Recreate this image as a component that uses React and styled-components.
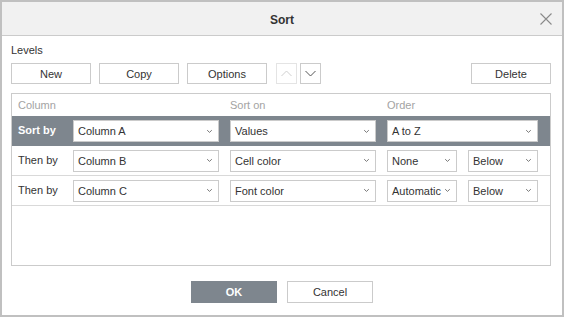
import React from "react";
import styled, { createGlobalStyle } from "styled-components";

const Global = createGlobalStyle`
  html, body { margin: 0; padding: 0; background: #fff; }
  body { font-family: "Liberation Sans", Arial, sans-serif; font-size: 11px; color: #333; }
  * { box-sizing: border-box; }
`;

const Dialog = styled.div`
  width: 564px;
  height: 317px;
  border: 2px solid #c0c0c0;
  background: #fff;
  display: flex;
  flex-direction: column;
`;

const Header = styled.div`
  height: 34px;
  flex: none;
  background: #f1f1f1;
  border-bottom: 1px solid #cbcbcb;
  display: flex;
  align-items: center;
  justify-content: center;
  position: relative;
`;

const Title = styled.div`
  font-weight: bold;
  font-size: 12px;
  color: #333;
  margin-top: 3px;
`;

const Close = styled.div`
  position: absolute;
  right: 10px;
  top: 11px;
  width: 12px;
  height: 12px;
  display: flex;
`;

const Body = styled.div`
  flex: 1;
  padding: 8px 11px 0 9px;
  display: flex;
  flex-direction: column;
`;

const Caption = styled.div`
  font-size: 11px;
  line-height: 13px;
  color: #333;
  height: 13px;
`;

const Toolbar = styled.div`
  display: flex;
  align-items: center;
  margin-top: 6px;
  height: 21px;
`;

const Button = styled.div`
  width: ${(p) => p.$w || 80}px;
  height: ${(p) => p.$h || 21}px;
  margin-right: ${(p) => p.$mr || 0}px;
  margin-left: ${(p) => (p.$push ? "auto" : "0")};
  border: 1px solid ${(p) => (p.$primary ? "#7e868e" : p.$disabled ? "#e4e4e4" : "#cbcbcb")};
  background: ${(p) => (p.$primary ? "#7e868e" : "#fff")};
  color: ${(p) => (p.$primary ? "#fff" : "#333")};
  font-weight: ${(p) => (p.$primary ? "bold" : "normal")};
  font-size: 11px;
  display: flex;
  align-items: center;
  justify-content: center;
  flex: none;
`;

const Table = styled.div`
  margin-top: 9px;
  height: 173px;
  border: 1px solid #cbcbcb;
  display: flex;
  flex-direction: column;
`;

const Row = styled.div`
  display: grid;
  grid-template-columns: 50px 146px 146px 151px;
  column-gap: 11px;
  align-items: center;
  height: ${(p) => p.$h || 30}px;
  flex: none;
  background: ${(p) => (p.$active ? "#7e868e" : "transparent")};
  border-bottom: ${(p) => (p.$line ? "1px solid #d9d9d9" : "none")};
`;

const HeadCell = styled.div`
  color: #a3a3a3;
  font-size: 11px;
  padding-left: ${(p) => p.$pad || 0}px;
  grid-column: ${(p) => p.$col || "auto"};
`;

const Label = styled.div`
  padding-left: 6px;
  font-size: 11px;
  color: ${(p) => (p.$active ? "#fff" : "#333")};
  font-weight: ${(p) => (p.$active ? "bold" : "normal")};
  margin-top: -2px;
`;

const Pair = styled.div`
  display: grid;
  grid-template-columns: 70px 70px;
  column-gap: 11px;
`;

const Select = styled.div`
  height: 22px;
  border: 1px solid #cbcbcb;
  background: #fff;
  display: flex;
  align-items: center;
  justify-content: space-between;
  padding: 0 5px 0 4px;
  font-size: 11px;
  color: #333;
  white-space: nowrap;
`;

const Footer = styled.div`
  display: flex;
  justify-content: center;
  gap: 10px;
  margin-top: 15px;
  padding-left: 2px;
`;

const Chevron = ({ color = "#777" }) => (
  <svg width="7" height="5" viewBox="0 0 7 5">
    <path d="M1.2 1.2 L3.5 3.4 L5.8 1.2" fill="none" stroke={color} strokeWidth="1" />
  </svg>
);

const Arrow = ({ up, color }) => (
  <svg width="11" height="7" viewBox="0 0 11 7">
    <path
      d={up ? "M0.5 6 L5.5 1 L10.5 6" : "M0.5 1 L5.5 6 L10.5 1"}
      fill="none"
      stroke={color}
      strokeWidth="1"
    />
  </svg>
);

const Sel = ({ children }) => (
  <Select>
    <span>{children}</span>
    <Chevron />
  </Select>
);

export default function App() {
  return (
    <>
      <Global />
      <Dialog>
        <Header>
          <Title>Sort</Title>
          <Close>
            <svg width="12" height="12" viewBox="0 0 12 12">
              <path d="M0.5 0.5 L11.5 11.5 M11.5 0.5 L0.5 11.5" stroke="#8a8a8a" strokeWidth="1.1" />
            </svg>
          </Close>
        </Header>
        <Body>
          <Caption>Levels</Caption>
          <Toolbar>
            <Button $mr={8}>New</Button>
            <Button $mr={8}>Copy</Button>
            <Button $mr={9}>Options</Button>
            <Button $w={21} $mr={3} $disabled>
              <Arrow up color="#cfcfcf" />
            </Button>
            <Button $w={21}>
              <Arrow color="#555" />
            </Button>
            <Button $push>Delete</Button>
          </Toolbar>
          <Table>
            <Row $h={22}>
              <HeadCell $col="1 / 3" $pad={6}>Column</HeadCell>
              <HeadCell $col="3">Sort on</HeadCell>
              <HeadCell $col="4">Order</HeadCell>
            </Row>
            <Row $active>
              <Label $active>Sort by</Label>
              <Sel>Column A</Sel>
              <Sel>Values</Sel>
              <Sel>A to Z</Sel>
            </Row>
            <Row $line>
              <Label>Then by</Label>
              <Sel>Column B</Sel>
              <Sel>Cell color</Sel>
              <Pair>
                <Sel>None</Sel>
                <Sel>Below</Sel>
              </Pair>
            </Row>
            <Row $line>
              <Label>Then by</Label>
              <Sel>Column C</Sel>
              <Sel>Font color</Sel>
              <Pair>
                <Sel>Automatic</Sel>
                <Sel>Below</Sel>
              </Pair>
            </Row>
          </Table>
          <Footer>
            <Button $w={86} $h={22} $primary>OK</Button>
            <Button $w={86} $h={22}>Cancel</Button>
          </Footer>
        </Body>
      </Dialog>
    </>
  );
}
